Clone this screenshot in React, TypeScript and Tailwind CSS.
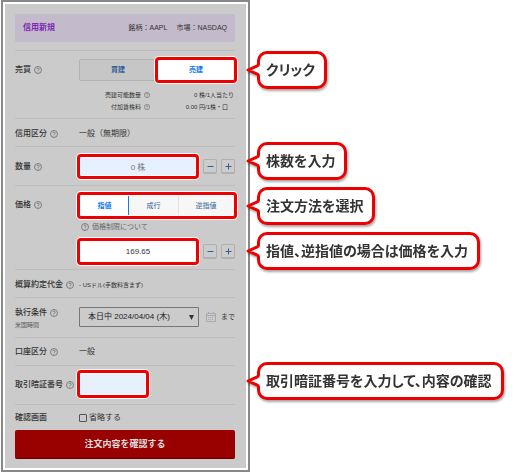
import type { ReactNode } from "react";
import { clsx } from "clsx";

const highlight =
  "rounded-[2px] border border-[#ee0000] shadow-[inset_0_0_0_1px_#ffffff,0_0_0_2px_#ee0000,0_0_0_3px_#ffffff] relative";

function HelpIcon({ label, small }: { label: string; small?: boolean }) {
  return (
    <button
      type="button"
      aria-label={label}
      className={clsx("shrink-0 text-[#666666]", small ? "size-[6px]" : "size-2")}
    >
      <svg viewBox="0 0 16 16" fill="none" stroke="currentColor" strokeWidth="1.5" className="size-full">
        <circle cx="8" cy="8" r="7" />
        <path d="M5.8 6.4a2.2 2.2 0 1 1 3.3 1.9c-.8.5-1.1.8-1.1 1.6" />
        <path d="M8 11.2v1.4" />
      </svg>
    </button>
  );
}

function Callout({ children, className }: { children: ReactNode; className: string }) {
  return (
    <div
      className={clsx(
        "absolute left-full z-10 ml-[22px] flex h-[38px] items-center whitespace-nowrap rounded-[10px] border-[3px] border-[#ee0000] bg-white pl-[6px] pr-[9px] text-[14px] font-bold text-[#333333] drop-shadow-[1px_2px_1px_rgba(0,0,0,0.35)] [font-feature-settings:'palt']",
        className
      )}
    >
      <svg viewBox="0 0 15 20" className="absolute -left-[14px] top-[6px] h-5 w-[15px]">
        <path d="M15 3.5 11.6 3.5 12.5 5.5 2.5 10 12.5 14.5 11.6 16.5 15 16.5Z" fill="#ffffff" />
        <path
          d="M12.5 2v2.2Q12.5 5.3 11.3 5.8L2 10l9.3 4.2Q12.5 14.7 12.5 15.8V18"
          fill="none"
          stroke="#ee0000"
          strokeWidth="3"
          strokeLinejoin="round"
        />
      </svg>
      {children}
    </div>
  );
}

function Row({
  label,
  help = true,
  htmlFor,
  note,
  className,
  children,
}: {
  label: string;
  help?: boolean;
  htmlFor?: string;
  note?: string;
  className?: string;
  children: ReactNode;
}) {
  return (
    <div className={clsx("relative flex border-t border-[#bdbdbd]", className)}>
      <div className="w-16 shrink-0 whitespace-nowrap">
        <div className="flex items-center gap-[3px]">
          <label htmlFor={htmlFor} className="font-medium">
            {label}
          </label>
          {help && <HelpIcon label={`${label}について`} />}
        </div>
        {note && <p className="text-[6px] leading-3 text-[#555555]">{note}</p>}
      </div>
      <div className="min-w-0 flex-1">{children}</div>
    </div>
  );
}

function Stepper() {
  return (
    <div className="flex gap-1">
      {["−", "+"].map((sign) => (
        <button
          key={sign}
          type="button"
          aria-label={sign === "+" ? "増やす" : "減らす"}
          className="flex h-[15px] w-[14px] items-center justify-center rounded-[2px] border border-b-2 border-[#b0b0b0] bg-[#cccccc] text-[#2f5f98]"
        >
          <svg viewBox="0 0 7 7" stroke="currentColor" className="size-[7px]">
            <path d={sign === "+" ? "M.5 3.5h6M3.5 .5v6" : "M.5 3.5h6"} />
          </svg>
        </button>
      ))}
    </div>
  );
}

const limits = [
  { name: "売建可能数量", value: "0 株/1人当たり", align: "pr-px" },
  { name: "付加賃株料", value: "0.00 円/1株・口", align: "pr-[7px]" },
];

export default function App() {
  return (
    <main className="bg-white pl-px pr-[265px] font-['Liberation_Sans','Noto_Sans_CJK_JP',sans-serif] text-[8px] leading-3 text-[#333333]">
      <form className="border-2 border-[#888888] bg-white p-[2px]" onSubmit={(e) => e.preventDefault()}>
        <div className="bg-[#cbcbcb] pb-[9px] pl-[10px] pr-[11px] pt-[10px]">
          <header className="mb-2 flex h-7 items-center justify-between rounded-[2px] bg-[#c3bacb] px-2">
            <h1 className="font-bold text-[#7a28b4]">信用新規</h1>
            <p className="flex gap-[9px] text-[7px]">
              <span>銘柄：AAPL</span>
              <span>市場：NASDAQ</span>
            </p>
          </header>

          <Row label="売買" className="h-[68px] pt-[13px]">
            <div className="-mt-[5px] flex h-[22px] text-[7px] font-bold">
              <button type="button" className="flex-1 rounded-l-[2px] border border-[#b3b3b3] bg-[#c6c6c6] text-[#2f5f98]">
                買建
              </button>
              <button type="button" className={clsx("flex-1 bg-white text-[#1177ee]", highlight)}>
                売建
              </button>
            </div>
            <dl className="mt-2 text-[6px]">
              {limits.map((item) => (
                <div key={item.name} className="flex items-center">
                  <dt className="flex w-[71px] items-center justify-end gap-[3px]">
                    {item.name}
                    <HelpIcon label={`${item.name}について`} small />
                  </dt>
                  <dd className={clsx("flex-1 whitespace-nowrap text-right", item.align)}>{item.value}</dd>
                </div>
              ))}
            </dl>
            <Callout className="top-0">クリック</Callout>
          </Row>

          <Row label="信用区分" className="h-7 pt-[9px]">
            一般（無期限）
          </Row>

          <Row label="数量" htmlFor="quantity" className="h-[39px] pt-[14px]">
            <div className="-mt-[5px] flex items-center gap-[6px]">
              <input
                id="quantity"
                defaultValue="0 株"
                className={clsx("h-[21px] min-w-0 flex-1 bg-[#e6f0ff] text-center text-[#777777]", highlight)}
              />
              <Stepper />
            </div>
            <Callout className="-top-[5px]">株数を入力</Callout>
          </Row>

          <Row label="価格" className="h-[84px] pt-[13px]">
            <div className={clsx("-mt-[5px] flex h-[23px] bg-[#f7f7f7] p-px text-[7px] text-[#2f5f98]", highlight)}>
              <button type="button" className="w-12 border-r border-[#1177ee] bg-white font-bold text-[#1177ee]">
                指値
              </button>
              <button type="button" className="w-[50px] border-r border-[#e2e2e2]">
                成行
              </button>
              <button type="button" className="flex-1">
                逆指値
              </button>
            </div>
            <p className="mt-1 flex items-center gap-[3px] pl-[2px] text-[7px] text-[#666666]">
              <HelpIcon label="価格制限" />
              <a href="#limit">価格制限について</a>
            </p>
            <div className="mt-[7px] flex items-center gap-[6px]">
              <input
                aria-label="指値価格"
                defaultValue="169.65"
                className={clsx("h-[23px] min-w-0 flex-1 bg-white text-center", highlight)}
              />
              <Stepper />
            </div>
            <Callout className="top-px">注文方法を選択</Callout>
            <Callout className="top-[46px]">指値、逆指値の場合は価格を入力</Callout>
          </Row>

          <Row label="概算約定代金" className="h-7 pt-[9px]">
            <span className="block text-[6px]">- USドル(手数料含まず)</span>
          </Row>

          <Row label="執行条件" htmlFor="period" note="米国時間" className="h-10 pt-[9px]">
            <div className="flex items-center gap-[7px]">
              <div className="relative min-w-0 flex-1">
                <select
                  id="period"
                  className="block h-5 w-full appearance-none rounded-[1px] border border-[#777777] bg-transparent pl-2 text-[#222222]"
                >
                  <option>本日中 2024/04/04 (木)</option>
                </select>
                <svg viewBox="0 0 5 5" className="pointer-events-none absolute right-[5px] top-2 size-[5px]">
                  <path d="M0 0h5L2.5 5Z" fill="#333333" />
                </svg>
              </div>
              <svg viewBox="0 0 10 10" fill="none" stroke="#aaaaaa" className="size-[10px]">
                <path d="M.5 1.5h9v8h-9zM.5 3.5h9M2.5 0v2M7.5 0v2" />
                <path d="M2 5.5h6M2 7.5h6" strokeDasharray="1 1" />
              </svg>
              <span className="-ml-[2px] text-[7px]">まで</span>
            </div>
          </Row>

          <Row label="口座区分" className="h-7 pt-2">
            一般
          </Row>

          <Row label="取引暗証番号" htmlFor="pin" className="h-[39px] pt-[13px]">
            <input
              id="pin"
              type="password"
              className={clsx("-mt-[7px] block h-6 w-[68px] bg-[#e6f0ff]", highlight)}
            />
            <Callout className="-top-1">取引暗証番号を入力して、内容の確認</Callout>
          </Row>

          <Row label="確認画面" help={false} className="h-[26px] pt-[7px]">
            <label className="flex items-center gap-[2px]">
              <input type="checkbox" className="size-2 appearance-none rounded-[1px] border border-[#555555]" />
              省略する
            </label>
          </Row>

          <button
            type="submit"
            className="block h-[29px] w-full rounded-[2px] border-b border-[#660000] bg-[#990000] text-[9px] font-bold text-[#dddddd]"
          >
            注文内容を確認する
          </button>
        </div>
      </form>
    </main>
  );
}
